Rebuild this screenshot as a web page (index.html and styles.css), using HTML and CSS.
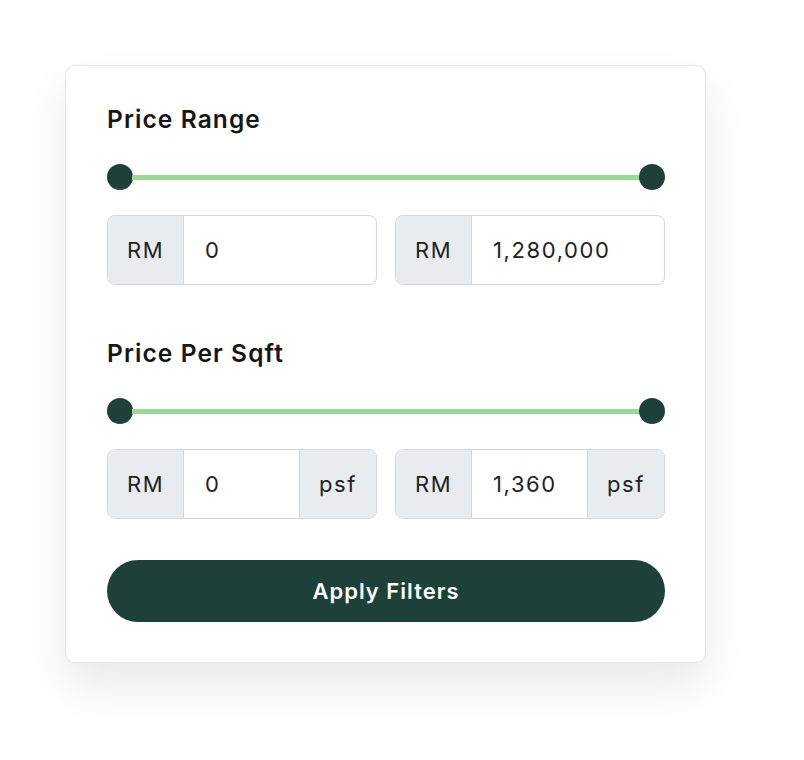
FILE: index.html
```html
<!DOCTYPE html>
<html lang="en">
<head>
  <meta charset="UTF-8">
  <title>Price Filters</title>
  <link rel="stylesheet" href="styles.css">
</head>
<body>

  <!-- Filter card -->
  <section class="filter-card">
    <h2 class="filter-title">Price Range</h2>
    <div class="range-slider">
      <span class="thumb"></span>
      <span class="track"></span>
      <span class="thumb"></span>
    </div>
    <div class="input-row">
      <div class="input-group">
        <span class="addon">RM</span>
        <span class="value">0</span>
      </div>
      <div class="input-group">
        <span class="addon">RM</span>
        <span class="value">1,280,000</span>
      </div>
    </div>

    <h2 class="filter-title second">Price Per Sqft</h2>
    <div class="range-slider">
      <span class="thumb"></span>
      <span class="track"></span>
      <span class="thumb"></span>
    </div>
    <div class="input-row">
      <div class="input-group">
        <span class="addon">RM</span>
        <span class="value">0</span>
        <span class="addon unit">psf</span>
      </div>
      <div class="input-group">
        <span class="addon">RM</span>
        <span class="value">1,360</span>
        <span class="addon unit">psf</span>
      </div>
    </div>

    <button class="apply-btn" type="button">Apply Filters</button>
  </section>

</body>
</html>
```

FILE: styles.css
```css
html {
  background: #fff;
}

body {
  margin: 0;
  padding: 65px 0 0 65px;
  min-height: 100vh;
  box-sizing: border-box;
  background: #fff;
  font-family: Inter, "Noto Sans", sans-serif;
  color: #222;
}

.filter-card {
  box-sizing: border-box;
  width: 641px;
  height: 598px;
  padding: 39px 40px 40px 41px;
  background: #fff;
  border: 1px solid #e6e6e6;
  border-radius: 10px;
  box-shadow: 0 22px 45px rgba(0, 0, 0, 0.09);
}

.filter-title {
  margin: 0;
  font-size: 24.5px;
  line-height: 29px;
  font-weight: 600;
  color: #161616;
  letter-spacing: 1.1px;
}

.filter-title.second {
  margin-top: 54px;
}

.range-slider {
  display: flex;
  align-items: center;
  height: 26px;
  margin-top: 30px;
}

.thumb {
  width: 26px;
  height: 26px;
  border-radius: 50%;
  background: #1d4039;
  flex-shrink: 0;
}

.track {
  flex: 1;
  height: 5px;
  margin: 0 -1px;
  background: #98d998;
}

.input-row {
  display: grid;
  grid-template-columns: 1fr 1fr;
  gap: 18px;
  margin-top: 25px;
}

.input-group {
  display: flex;
  height: 70px;
  box-sizing: border-box;
  border: 1.5px solid #d3d8de;
  border-radius: 8px;
  overflow: hidden;
  font-size: 22px;
  letter-spacing: 1.6px;
}

.addon {
  width: 75px;
  flex-shrink: 0;
  display: flex;
  align-items: center;
  justify-content: center;
  background: #e9ecef;
  border-right: 1.5px solid #d3d8de;
  color: #222;
}

.addon.unit {
  width: 76px;
  border-right: none;
  border-left: 1.5px solid #d3d8de;
}

.value {
  flex: 1;
  display: flex;
  align-items: center;
  padding-left: 21px;
  color: #222;
}

.apply-btn {
  display: block;
  width: 100%;
  height: 62px;
  margin-top: 41px;
  border: none;
  border-radius: 31px;
  background: #1d4039;
  color: #fff;
  font-family: Inter, "Noto Sans", sans-serif;
  font-size: 22px;
  font-weight: 600;
  letter-spacing: 1px;
  cursor: pointer;
}
```
